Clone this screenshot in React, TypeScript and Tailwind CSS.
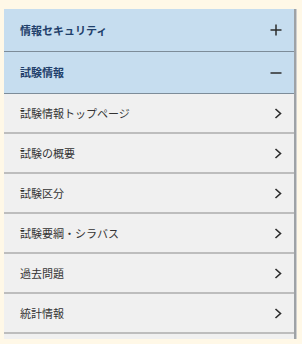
const subItems = ["試験情報トップページ", "試験の概要", "試験区分", "試験要綱・シラバス", "過去問題", "統計情報"];

function Chevron() {
  return (
    <svg width="8" height="11" viewBox="0 0 8 11" className="shrink-0">
      <polyline points="1.5,1 6.5,5.5 1.5,10" fill="none" stroke="#2b2b2b" strokeWidth="1.6" />
    </svg>
  );
}

function PlusMinus({ open }: { open: boolean }) {
  return (
    <svg width="12" height="12" viewBox="0 0 12 12" className="shrink-0">
      <line x1="0.5" y1="6" x2="11.5" y2="6" stroke="#2b2b2b" strokeWidth="1.5" />
      {!open && <line x1="6" y1="0.5" x2="6" y2="11.5" stroke="#2b2b2b" strokeWidth="1.5" />}
    </svg>
  );
}

export default function App() {
  return (
    <div
      className="w-[302px] h-[344px] bg-[#fff8e7] pt-[9px] pl-[4px] overflow-hidden"
      style={{ fontFamily: '"Noto Sans CJK JP", "Noto Sans", sans-serif' }}
    >
      <div className="w-[292px] border-r-2 border-[#9ea2a6] shadow-[1px_0_0_#cfcfcf]">
        <div className="h-[43px] bg-[#c6ddef] border-b border-[#7d8c99] flex items-center justify-between pl-[16px] pr-[12px]">
          <span className="text-[11px] font-bold text-[#1f3f6b]">情報セキュリティ</span>
          <PlusMinus open={false} />
        </div>
        <div className="h-[42px] bg-[#c6ddef] border-b border-[#7d8c99] flex items-center justify-between pl-[16px] pr-[12px]">
          <span className="text-[11px] font-bold text-[#1f3f6b]">試験情報</span>
          <PlusMinus open={true} />
        </div>
        {subItems.map((item) => (
          <div
            key={item}
            className="h-[40px] bg-[#f0f0f0] border-b-2 border-[#bdbdbd] flex items-center justify-between pl-[16px] pr-[12px]"
          >
            <span className="text-[11px] text-[#333333]">{item}</span>
            <Chevron />
          </div>
        ))}
        <div className="h-[5px] bg-[#f0f0f0]" />
      </div>
    </div>
  );
}
